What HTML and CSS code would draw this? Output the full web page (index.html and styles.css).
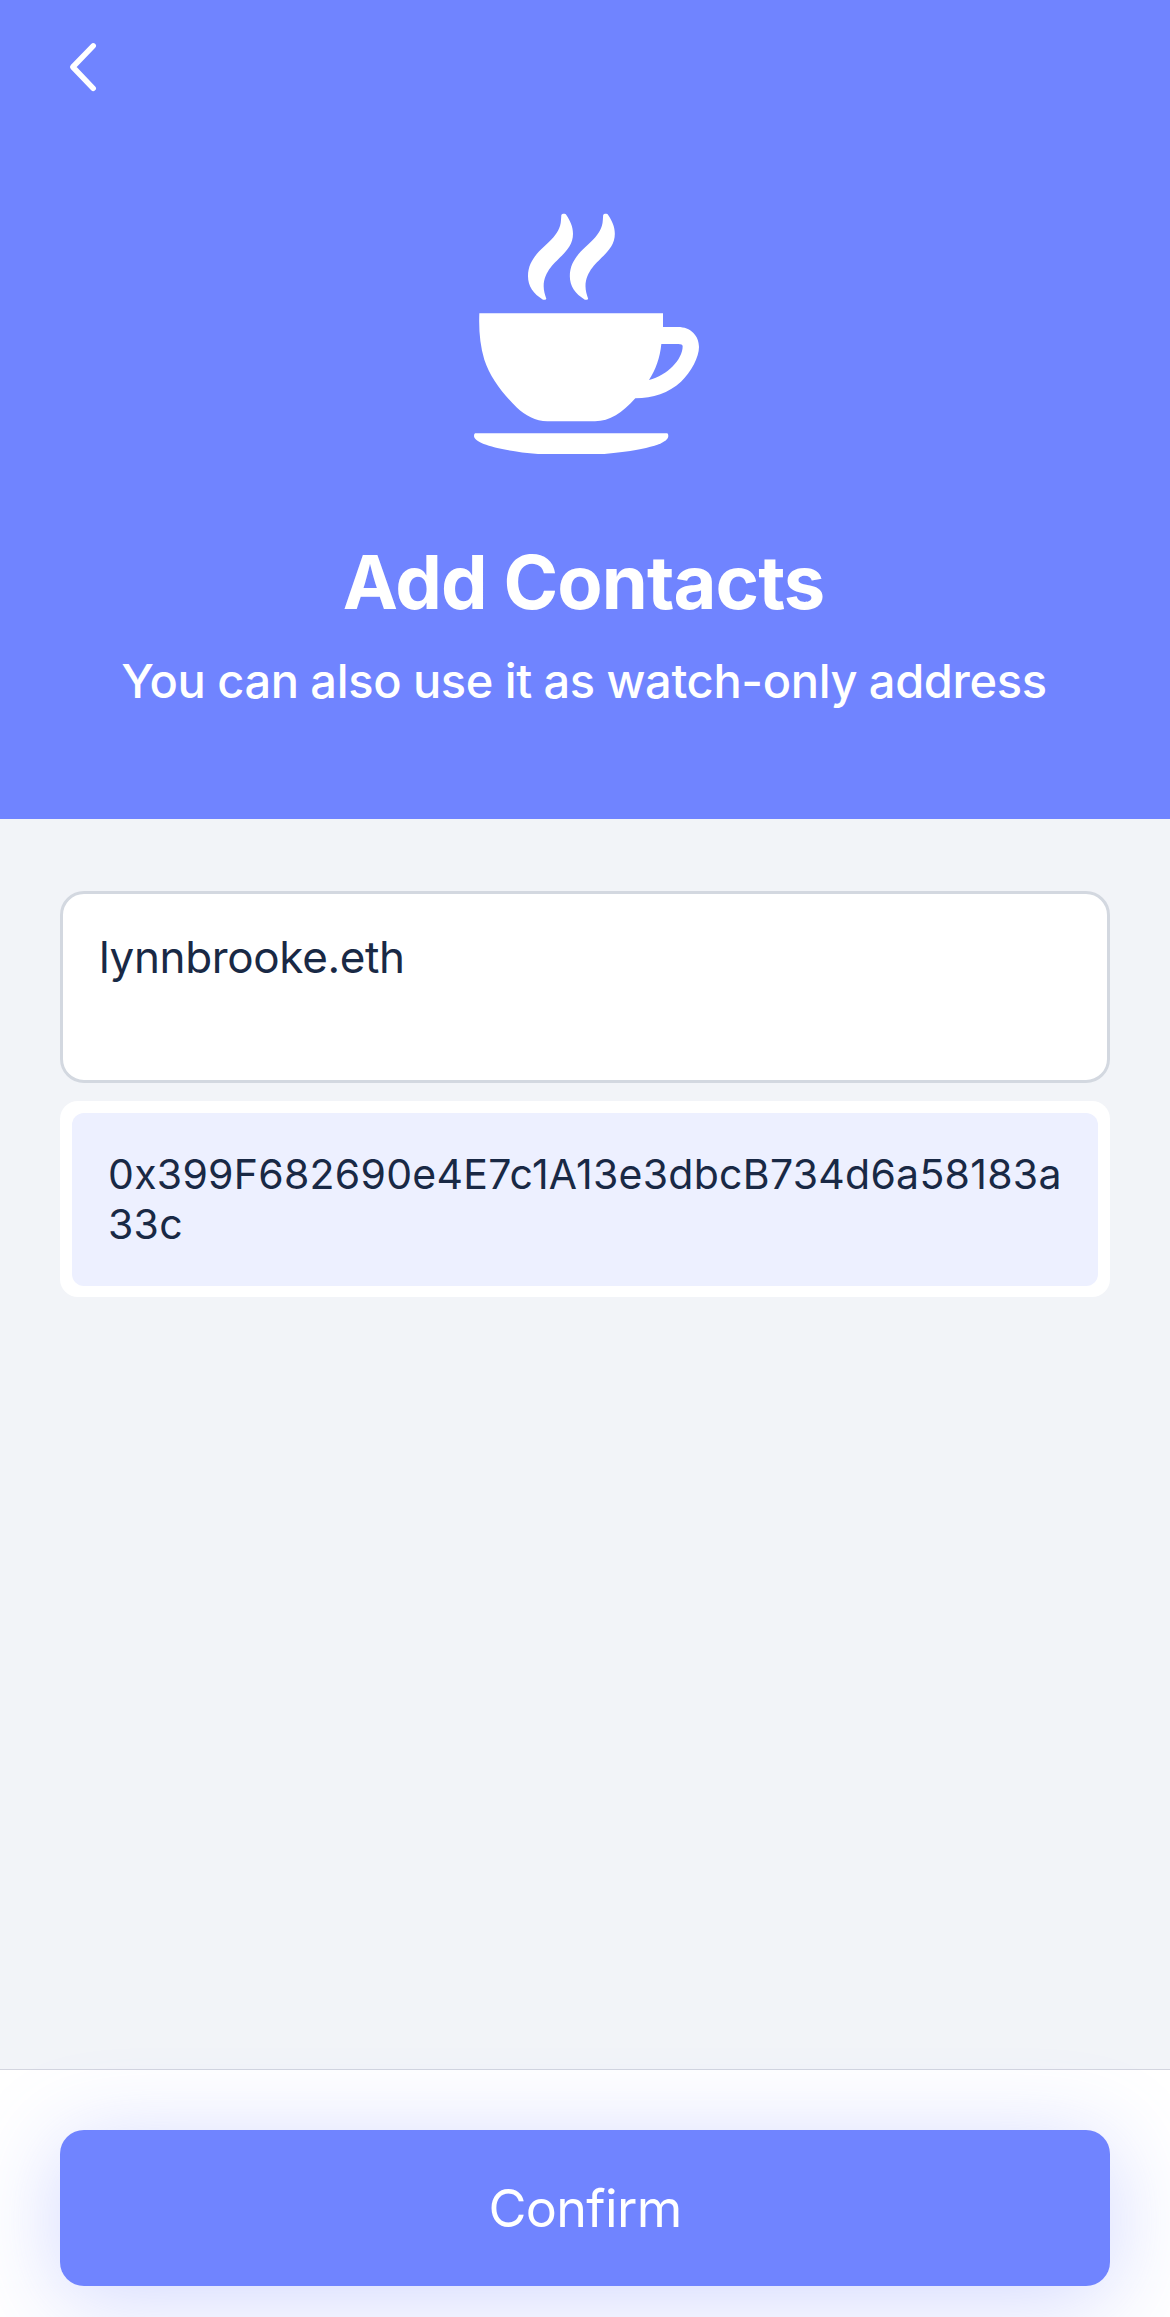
FILE: index.html
```html
<!DOCTYPE html>
<html lang="en">
<head>
<meta charset="utf-8">
<title>Add Contacts</title>
<link rel="stylesheet" href="styles.css">
</head>
<body>
<div class="screen">
<header class="hero">
<svg class="back" viewBox="0 0 40 60"><path d="M33.2 8.8 12.8 30 33.2 51.3"/></svg>
<svg class="cup" viewBox="60 60 702 744">
<path d="M88 370H639V411H684C722 411 747 437 747 471C747 502 724 545 693 575C656 609 609 624 556 625C516 669 480 694 435 694H292C257 693 225 676 201 653C156 608 121 563 103 509C90 466 86 421 88 370ZM634 462C630 503 617 539 597 570C653 556 698 508 698 469C698 464 693 462 685 462Z"/>
<path d="M75 730H652Q655 732 655 738C655 763 576 782 463 792H264C151 782 72 761 72 738Q72 732 75 730Z"/>
<path id="steam" d="M334 75C336 71 346 70 349 75C360 91 369 110 369 131C369 198 283 213 281 289C281 302 285 316 289 326Q286 331 279 329C250 312 234 288 234 259C234 176 330 160 333 90Z"/>
<use href="#steam" x="125.500"/>
</svg>
<h1 class="title">Add Contacts</h1>
<p class="subtitle">You can also use it as watch-only address</p>
</header>
<main class="content">
<div class="field">lynnbrooke.eth</div>
<div class="result"><div class="address">0x399F682690e4E7c1A13e3dbcB734d6a58183a33c</div></div>
</main>
<footer class="footer"><button class="confirm">Confirm</button></footer>
</div>
</body>
</html>
```
FILE: styles.css
```css
* { box-sizing: border-box; }
body { margin: 0; font-family: Inter, sans-serif; color: #192945; }
.screen { height: 2317px; display: flex; flex-direction: column; background: #f2f4f8; overflow: hidden; }
.hero { height: 819px; background: #7084ff; color: #fff; display: flex; flex-direction: column; align-items: center; }
.back { width: 40px; height: 60px; margin: 37px 0 0 60px; align-self: flex-start; fill: none; stroke: #fff; stroke-width: 5.5; stroke-linecap: round; stroke-linejoin: round; }
.cup { width: 234px; height: 248px; margin-top: 113px; margin-left: 4px; fill: #fff; fill-rule: evenodd; }
.title { margin: 79px 3px 0 0; font-size: 74px; line-height: 90px; font-weight: 700; letter-spacing: -.9px; white-space: nowrap; }
.subtitle { margin: 25px 2px 0 0; font-size: 47px; line-height: 58px; font-weight: 500; letter-spacing: -.35px; word-spacing: -.5px; white-space: nowrap; }
.content { flex: 1; padding: 72px 60px; }
.field { height: 192px; border: 3px solid #d3d8e0; border-radius: 24px; background: #fff; padding: 34px 36px; font-size: 44px; line-height: 58px; letter-spacing: -.35px; }
.result { height: 196px; margin-top: 18px; padding: 12px 12px 11px; border-radius: 18px; background: #fff; }
.address { height: 173px; padding: 36px 28px 36px 36px; border-radius: 12px; background: #edf0ff; font-size: 41px; line-height: 50px; letter-spacing: .27px; overflow-wrap: anywhere; }
.footer { height: 248px; padding: 60px; background: #fff; border-top: 1px solid #d3d5df; }
.confirm { display: block; width: 100%; height: 156px; padding: 0; border: 0; border-radius: 24px; background: #7084ff; color: #fff; font: 400 52px Inter, sans-serif; letter-spacing: -.65px; box-shadow: 0 12px 90px rgba(112,132,255,.32); }
```
